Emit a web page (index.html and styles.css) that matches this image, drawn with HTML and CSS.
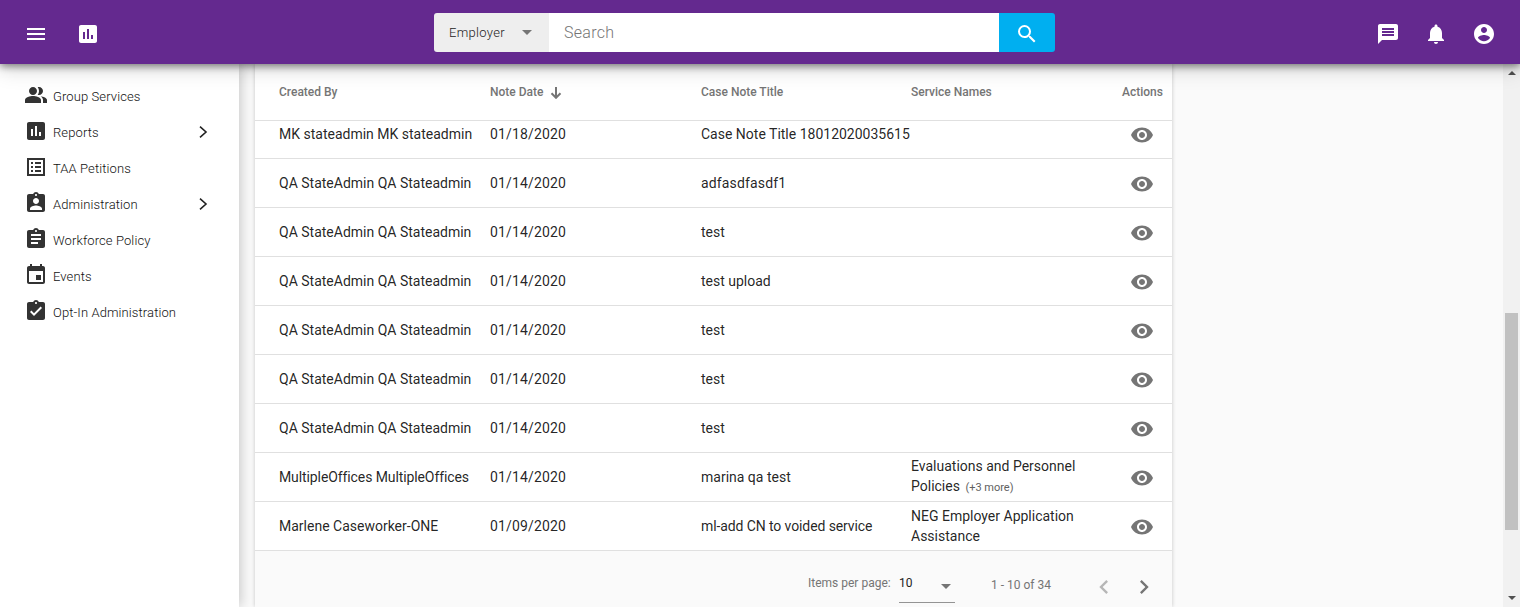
FILE: index.html
```html
<!DOCTYPE html>
<html lang="en">
<head>
<meta charset="utf-8">
<title>Case Notes</title>
<link rel="stylesheet" href="styles.css">
</head>
<body>
<svg class="sprite" aria-hidden="true">
  <symbol id="menu" viewBox="0 0 24 24"><path d="M3 18h18v-2H3v2zm0-5h18v-2H3v2zm0-7v2h18V6H3z"/></symbol>
  <symbol id="poll" viewBox="0 0 24 24"><path d="M19 3H5c-1.100 0-2 .9-2 2v14c0 1.100.9 2 2 2h14c1.100 0 2-.9 2-2V5c0-1.100-.9-2-2-2zM9 17H7v-7h2v7zm4 0h-2V7h2v10zm4 0h-2v-4h2v4z"/></symbol>
  <symbol id="search" viewBox="0 0 24 24"><path d="M15.500 14h-.79l-.28-.27A6.471 6.471 0 0 0 16 9.500 6.500 6.500 0 1 0 9.500 16c1.610 0 3.090-.59 4.230-1.570l.27.28v.79l5 4.990L20.490 19l-4.990-5zm-6 0C7.010 14 5 11.990 5 9.500S7.010 5 9.500 5 14 7.010 14 9.500 11.990 14 9.500 14z"/></symbol>
  <symbol id="chat" viewBox="0 0 24 24"><path d="M20 2H4c-1.100 0-1.990.9-1.990 2L2 22l4-4h14c1.100 0 2-.9 2-2V4c0-1.100-.9-2-2-2zM6 9h12v2H6V9zm12 5H6v-2h12v2zm0-6H6V6h12v2z"/></symbol>
  <symbol id="bell" viewBox="0 0 24 24"><path d="M12 22c1.100 0 2-.9 2-2h-4c0 1.100.89 2 2 2zm6-6v-5c0-3.070-1.640-5.640-4.500-6.320V4c0-.83-.67-1.500-1.500-1.500s-1.500.67-1.500 1.500v.68C7.630 5.360 6 7.920 6 11v5l-2 2v1h16v-1l-2-2z"/></symbol>
  <symbol id="account" viewBox="0 0 24 24"><path d="M12 2C6.480 2 2 6.480 2 12s4.480 10 10 10 10-4.480 10-10S17.520 2 12 2zm0 3c1.660 0 3 1.340 3 3s-1.340 3-3 3-3-1.340-3-3 1.340-3 3-3zm0 14.200c-2.500 0-4.710-1.280-6-3.220.03-1.990 4-3.080 6-3.080 1.990 0 5.970 1.090 6 3.080-1.290 1.940-3.500 3.220-6 3.220z"/></symbol>
  <symbol id="group" viewBox="0 0 24 24"><path d="M16.670 13.130C18.040 14.060 19 15.320 19 17v3h4v-3c0-2.180-3.570-3.470-6.330-3.870zM15 12c2.210 0 4-1.790 4-4s-1.790-4-4-4c-.47 0-.91.1-1.330.24C14.500 5.270 15 6.580 15 8s-.5 2.730-1.330 3.760c.42.14.86.24 1.330.24zM9 12c2.210 0 4-1.790 4-4s-1.790-4-4-4-4 1.790-4 4 1.790 4 4 4zm0 1c-2.670 0-8 1.340-8 4v3h16v-3c0-2.660-5.330-4-8-4z"/></symbol>
  <symbol id="list" viewBox="0 0 24 24"><path d="M19 5v14H5V5h14m2-2H3v18h18V3zM11 7h6v2h-6V7zm0 4h6v2h-6v-2zm0 4h6v2h-6v-2zM7 7h2v2H7V7zm0 4h2v2H7v-2zm0 4h2v2H7v-2z"/></symbol>
  <symbol id="badge" viewBox="0 0 24 24"><path d="M19 3h-4.180C14.400 1.840 13.300 1 12 1s-2.400.84-2.820 2H5c-1.100 0-2 .9-2 2v14c0 1.100.9 2 2 2h14c1.100 0 2-.9 2-2V5c0-1.100-.9-2-2-2zm-7 0c.55 0 1 .45 1 1s-.45 1-1 1-1-.45-1-1 .45-1 1-1zm0 4c1.660 0 3 1.340 3 3s-1.340 3-3 3-3-1.340-3-3 1.340-3 3-3zm6 12H6v-1.400c0-2 4-3.100 6-3.100s6 1.100 6 3.100V19z"/></symbol>
  <symbol id="clip" viewBox="0 0 24 24"><path d="M19 3h-4.180C14.400 1.840 13.300 1 12 1s-2.400.84-2.820 2H5c-1.100 0-2 .9-2 2v14c0 1.100.9 2 2 2h14c1.100 0 2-.9 2-2V5c0-1.100-.9-2-2-2zm-7 0c.55 0 1 .45 1 1s-.45 1-1 1-1-.45-1-1 .45-1 1-1zm2 14H7v-2h7v2zm3-4H7v-2h10v2zm0-4H7V7h10v2z"/></symbol>
  <symbol id="check" viewBox="0 0 24 24"><path d="M19 3h-4.180C14.400 1.840 13.300 1 12 1s-2.400.84-2.820 2H5c-1.100 0-2 .9-2 2v14c0 1.100.9 2 2 2h14c1.100 0 2-.9 2-2V5c0-1.100-.9-2-2-2zm-7 0c.55 0 1 .45 1 1s-.45 1-1 1-1-.45-1-1 .45-1 1-1zm-2 14l-4-4 1.410-1.410L10 14.170l6.590-6.590L18 9l-8 8z"/></symbol>
  <symbol id="event" viewBox="0 0 24 24"><path d="M17 12h-5v5h5v-5zM16 1v2H8V1H6v2H5c-1.110 0-1.990.9-1.990 2L3 19c0 1.100.89 2 2 2h14c1.100 0 2-.9 2-2V5c0-1.100-.9-2-2-2h-1V1h-2zm3 18H5V8h14v11z"/></symbol>
  <symbol id="eye" viewBox="0 0 24 24"><path d="M12 4.500C7 4.500 2.730 7.610 1 12c1.730 4.390 6 7.500 11 7.500s9.270-3.110 11-7.500c-1.730-4.390-6-7.500-11-7.500zM12 17c-2.760 0-5-2.240-5-5s2.240-5 5-5 5 2.240 5 5-2.240 5-5 5zm0-8c-1.660 0-3 1.340-3 3s1.340 3 3 3 3-1.340 3-3-1.340-3-3-3z"/></symbol>
  <symbol id="left" viewBox="0 0 24 24"><path d="M15.410 7.410 14 6l-6 6 6 6 1.410-1.410L10.830 12z"/></symbol>
  <symbol id="right" viewBox="0 0 24 24"><path d="M10 6 8.590 7.410 13.170 12l-4.580 4.590L10 18l6-6z"/></symbol>
</svg>
<header class="topbar">
  <div class="topbar-left">
    <svg class="icon"><use href="#menu"/></svg>
    <svg class="icon"><use href="#poll"/></svg>
  </div>
  <div class="searchbox">
    <div class="scope"><span class="scope-label">Employer</span><i class="caret"></i></div>
    <div class="field"><span class="placeholder">Search</span></div>
    <div class="go"><svg class="icon"><use href="#search"/></svg></div>
  </div>
  <div class="topbar-right">
    <svg class="icon"><use href="#chat"/></svg>
    <svg class="icon"><use href="#bell"/></svg>
    <svg class="icon"><use href="#account"/></svg>
  </div>
</header>
<div class="layout">
  <nav class="sidebar">
    <a class="nav-item"><svg class="icon"><use href="#group"/></svg><span>Group Services</span></a>
    <a class="nav-item"><svg class="icon"><use href="#poll"/></svg><span>Reports</span><svg class="chevron" viewBox="0 0 9 12"><path d="M1 .7 7 6l-6 5.300"/></svg></a>
    <a class="nav-item"><svg class="icon"><use href="#list"/></svg><span>TAA Petitions</span></a>
    <a class="nav-item"><svg class="icon"><use href="#badge"/></svg><span>Administration</span><svg class="chevron" viewBox="0 0 9 12"><path d="M1 .7 7 6l-6 5.300"/></svg></a>
    <a class="nav-item"><svg class="icon"><use href="#clip"/></svg><span>Workforce Policy</span></a>
    <a class="nav-item"><svg class="icon"><use href="#event"/></svg><span>Events</span></a>
    <a class="nav-item"><svg class="icon"><use href="#check"/></svg><span>Opt-In Administration</span></a>
  </nav>
  <main class="content">
    <section class="card">
      <div class="row head">
        <span>Created By</span>
        <span class="sorted">Note Date<svg class="sort" viewBox="0 0 12 12"><path d="M6 0v10.500M1.500 6.300 6 10.800l4.500-4.500"/></svg></span>
        <span>Case Note Title</span><span>Service Names</span><span class="actions-title">Actions</span>
      </div>
      <div class="rows">
        <div class="row"><span>MK stateadmin MK stateadmin</span><span class="date">01/18/2020</span><span>Case Note Title 18012020035615</span><span></span><svg class="icon"><use href="#eye"/></svg></div>
        <div class="row"><span>QA StateAdmin QA Stateadmin</span><span class="date">01/14/2020</span><span class="wide">adfasdfasdf1</span><span></span><svg class="icon"><use href="#eye"/></svg></div>
        <div class="row"><span>QA StateAdmin QA Stateadmin</span><span class="date">01/14/2020</span><span>test</span><span></span><svg class="icon"><use href="#eye"/></svg></div>
        <div class="row"><span>QA StateAdmin QA Stateadmin</span><span class="date">01/14/2020</span><span>test upload</span><span></span><svg class="icon"><use href="#eye"/></svg></div>
        <div class="row"><span>QA StateAdmin QA Stateadmin</span><span class="date">01/14/2020</span><span>test</span><span></span><svg class="icon"><use href="#eye"/></svg></div>
        <div class="row"><span>QA StateAdmin QA Stateadmin</span><span class="date">01/14/2020</span><span>test</span><span></span><svg class="icon"><use href="#eye"/></svg></div>
        <div class="row"><span>QA StateAdmin QA Stateadmin</span><span class="date">01/14/2020</span><span>test</span><span></span><svg class="icon"><use href="#eye"/></svg></div>
        <div class="row"><span class="tight">MultipleOffices MultipleOffices</span><span class="date">01/14/2020</span><span>marina qa test</span><span>Evaluations and Personnel<br>Policies <small class="more">(+3 more)</small></span><svg class="icon"><use href="#eye"/></svg></div>
        <div class="row"><span>Marlene Caseworker-ONE</span><span class="date">01/09/2020</span><span class="tight">ml-add CN to voided service</span><span>NEG Employer Application<br>Assistance</span><svg class="icon"><use href="#eye"/></svg></div>
      </div>
      <footer class="pager">
        <span class="per-page">Items per page:</span>
        <span class="size">10<i class="caret"></i></span>
        <span class="range">1 - 10 of 34</span>
        <svg class="icon page-icon disabled"><use href="#left"/></svg>
        <svg class="icon page-icon"><use href="#right"/></svg>
      </footer>
    </section>
  </main>
  <div class="scrollbar"><i class="arrow up"></i><i class="thumb"></i><i class="arrow down"></i></div>
</div>
</body>
</html>
```

FILE: styles.css
```css
* { box-sizing: border-box; }
body { margin: 0; height: 607px; overflow: hidden; background: #fafafa; font-family: Roboto, "Liberation Sans", sans-serif; color: rgba(0,0,0,.87); }
.sprite { display: none; }
.icon { width: 24px; height: 24px; fill: currentColor; flex: none; display: block; }
.topbar { position: relative; z-index: 5; height: 64px; background: #64298f; color: #fff; display: grid; grid-template-columns: 434px 621px 1fr; align-items: center; box-shadow: 0 2px 8px rgba(0,0,0,.5), 0 6px 20px rgba(0,0,0,.14); }
.topbar-left { display: flex; gap: 28px; padding: 4px 0 0 24px; }
.topbar-right { display: flex; gap: 24px; justify-content: flex-end; padding: 4px 24px 0 0; }
.searchbox { display: flex; height: 39px; margin-top: 1px; border-radius: 3px; overflow: hidden; }
.scope { width: 115px; background: #eee; color: #222; display: flex; align-items: center; justify-content: space-between; padding: 0 17px 0 15px; font-size: 13px; }
.scope-label { font-weight: 300; letter-spacing: .3px; }
.caret { width: 0; height: 0; border: 5px solid transparent; border-top-color: #757575; border-bottom: 0; }
.field { flex: 1; background: #fff; color: #757575; display: flex; align-items: center; padding-left: 15px; font-size: 16px; font-weight: 300; letter-spacing: .3px; }
.go { width: 56px; background: #00aff0; display: flex; align-items: center; justify-content: center; padding: 3px 1px 0 0; }
.layout { display: grid; grid-template-columns: 239px 1264px 17px; height: 543px; }
.sidebar { background: #fff; color: #333; padding-top: 13px; box-shadow: 2px 0 12px rgba(0,0,0,.2); }
.nav-item { display: flex; align-items: center; height: 36px; padding: 0 31px 0 24px; font-size: 13px; font-weight: 300; color: #111; letter-spacing: .1px; }
.nav-item .icon { margin-top: -1px; color: #333; }
.nav-item span { margin-left: 5px; flex: 1; padding-top: 3px; }
.chevron { width: 9px; height: 12px; margin-top: 2px; fill: none; stroke: #222; stroke-width: 1.6; }
.content { padding-left: 16px; overflow: hidden; }
.card { width: 917px; height: 543px; background: #fff; box-shadow: 0 0 4px rgba(0,0,0,.22); }
.row { display: grid; grid-template-columns: 211px 211px 210px 200px 61px; align-items: center; height: 49px; padding-left: 24px; border-bottom: 1px solid #e0e0e0; font-size: 14px; line-height: 20px; white-space: nowrap; }
.date { letter-spacing: .15px; }
.wide { letter-spacing: .15px; }
.tight { letter-spacing: -.1px; }
.row > .icon { justify-self: center; color: #757575; margin-top: 2px; }
.row.head { position: relative; z-index: 1; height: 57px; background: #fff; color: #757575; font-size: 12px; font-weight: 500; }
.sorted { display: flex; align-items: center; }
.sort { width: 12px; height: 12px; margin: 1px 0 0 7px; fill: none; stroke: #757575; stroke-width: 2; }
.actions-title { text-align: center; padding-left: 2px; }
.rows { margin-top: -11px; }
.more { font-size: 11px; color: #616161; margin-left: 2px; }
.pager { display: flex; height: 56px; padding-left: 553px; background: #fafafa; color: #757575; font-size: 12px; align-items: center; }
.per-page { width: 91px; padding-top: 7px; }
.size { width: 56px; height: 39px; margin-top: 9px; display: flex; justify-content: space-between; align-items: center; border-bottom: 1px solid #949494; color: #222; padding-right: 4px; }
.size .caret { margin-top: 6px; }
.range { width: 99px; margin-left: 36px; padding-top: 11px; }
.page-icon { width: 28px; height: 28px; margin-top: 16px; margin-right: 12px; }
.disabled { opacity: .5; }
.scrollbar { background: #f1f1f1; display: flex; flex-direction: column; align-items: center; }
.arrow { border: 4px solid transparent; }
.up { border-top: 0; border-bottom-color: #505050; margin-top: 7px; }
.thumb { width: 13px; height: 217px; margin-top: 238px; background: #c1c1c1; }
.down { border-bottom: 0; border-top-color: #505050; margin-top: 66px; }
```
